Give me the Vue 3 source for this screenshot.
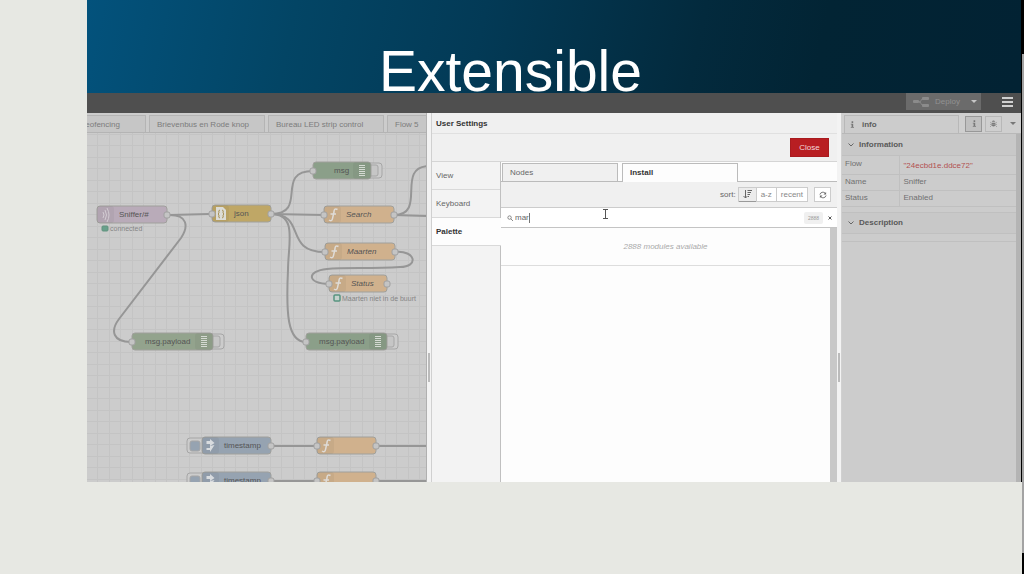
<script setup>
import { ref } from 'vue'

const query = ref('mar')

const flowTabs = [
  { name: 'Geofencing', cls: 'cut' },
  { name: 'Brievenbus en Rode knop', cls: 'wide' },
  { name: 'Bureau LED strip control', cls: 'wide' },
  { name: 'Flow 5', cls: 'open' },
]

const sections = ['View', 'Keyboard', 'Palette']

const wires = [
  'M170 215 L209 214',
  'M170 215 C187 215 189 226 181 238 L119 319 C110 331 113 342 131 342',
  'M271 214 C309 214 274 171 313 171',
  'M271 214 L324 215',
  'M271 214 C307 214 283 252 325 252',
  'M271 214 C298 214 288 244 288 270 C286 312 287 342 306 342',
  'M394 215 C428 215 394 166 430 166',
  'M394 215 L430 216',
  'M395 252 C416 250 419 267 400 267 C370 269 345 267 327 269 C306 271 307 284 329 284',
  'M271 446 L317 446',
  'M376 446 L430 446',
  'M271 481 L317 481',
  'M376 481 L430 481',
]

const nodes = [
  { x: 97, y: 206, w: 70, fill: '#b9abb9', label: 'Sniffer/#', tx: 119, icon: 'wave', out: true },
  { x: 212, y: 205, w: 59, fill: '#bfa766', label: 'json', tx: 234, icon: 'json', in: true, out: true },
  { x: 313, y: 162, w: 58, fill: '#8b9f89', label: 'msg', tx: 334, icon: 'debug', in: true },
  { x: 324, y: 206, w: 70, fill: '#d0b18d', label: 'Search', tx: 346, icon: 'fn', in: true, out: true, italic: true },
  { x: 325, y: 243, w: 70, fill: '#d0b18d', label: 'Maarten', tx: 347, icon: 'fn', in: true, out: true, italic: true },
  { x: 329, y: 275, w: 58, fill: '#d0b18d', label: 'Status', tx: 351, icon: 'fn', in: true, out: true, italic: true },
  { x: 132, y: 333, w: 81, fill: '#93a38d', label: 'msg.payload', tx: 145, icon: 'debug', in: true },
  { x: 306, y: 333, w: 81, fill: '#8b9f89', label: 'msg.payload', tx: 319, icon: 'debug', in: true },
  { x: 202, y: 437, w: 69, fill: '#96a3b1', label: 'timestamp', tx: 224, icon: 'inject', out: true },
  { x: 317, y: 437, w: 59, fill: '#d0b18d', label: '', tx: 0, icon: 'fn', in: true, out: true },
  { x: 202, y: 472, w: 69, fill: '#96a3b1', label: 'timestamp', tx: 224, icon: 'inject', out: true },
  { x: 317, y: 472, w: 59, fill: '#d0b18d', label: '', tx: 0, icon: 'fn', in: true, out: true },
]
</script>

<template>
  <div class="slide">
    <div class="stage">
      <header class="hero"><h1>Extensible</h1></header>

      <div class="navbar">
        <div class="deploy">
          <button class="deploy-main">
            <svg width="16" height="12" viewBox="0 0 16 12" aria-hidden="true">
              <rect x="0" y="4" width="6" height="3" rx="1" />
              <rect x="9" y="1" width="7" height="3" rx="1" />
              <rect x="9" y="8" width="7" height="3" rx="1" />
              <path d="M6 6 C9 6 7 3 10 3 M6 6 C9 6 7 9 10 9" />
            </svg>
            <span>Deploy</span>
          </button>
          <button class="deploy-caret" aria-label="Deploy options"><i class="caret"></i></button>
        </div>
        <button class="burger" aria-label="Menu"><i></i><i></i><i></i></button>
      </div>

      <div class="editor">
        <section class="workspace">
          <div class="flow-tabs">
            <button v-for="t in flowTabs" :key="t.name" :class="t.cls">{{ t.name }}</button>
          </div>
          <svg class="canvas" width="100%" height="349">
            <defs>
              <pattern id="grid" x="10" y="12" width="23" height="23" patternUnits="userSpaceOnUse">
                <path d="M0 0.5 H23 M0.5 0 V23 M0 12.5 H23 M12.5 0 V23" stroke="#c4c4c4" fill="none" />
              </pattern>
            </defs>
            <rect width="100%" height="100%" fill="#cccccc" />
            <rect width="100%" height="100%" fill="url(#grid)" />
            <g transform="translate(-87 -133)">
              <path v-for="(d, i) in wires" :key="i" :d="d" class="wire" />
              <g v-for="(n, i) in nodes" :key="'n' + i" :transform="`translate(${n.x} ${n.y})`">
                <g v-if="n.icon === 'debug'" class="tap">
                  <rect :x="n.w - 6" y="1" width="17" height="15" rx="3" />
                  <rect :x="n.w - 4" y="3" width="11" height="11" rx="2" />
                </g>
                <g v-if="n.icon === 'inject'" class="tap">
                  <rect x="-15" y="1" width="20" height="15" rx="3" />
                  <rect x="-12" y="4" width="10" height="10" rx="2" :fill="n.fill" />
                </g>
                <rect x="0" y="0" :width="n.w" height="17" rx="3" :fill="n.fill" class="body" />
                <rect v-if="n.icon === 'debug'" :x="n.w - 18" y="0" width="18" height="17" rx="3" class="shade" />
                <rect v-else x="0" y="0" width="17" height="17" rx="3" class="shade" />

                <path v-if="n.icon === 'fn'" class="glyph" d="M13.5 3.5 C11 2 10 3.5 10 6 L8.5 12.5 C8.3 15 6.5 15 5 14 M6.5 8 H12" />
                <g v-if="n.icon === 'wave'" class="glyph thin">
                  <path d="M6 6 Q8 9 6 12 M8 4 Q11 9 8 14 M10 2 Q14 9 10 16" />
                </g>
                <g v-if="n.icon === 'json'">
                  <path d="M4 2 H11 L14 5 V15 H4 Z" fill="#dcdcd6" />
                  <path d="M8 5 Q6 5 7 8 L6 9 L7 10 Q6 13 8 13 M10 5 Q12 5 11 8 L12 9 L11 10 Q12 13 10 13" fill="none" stroke="#a8935a" />
                </g>
                <path v-if="n.icon === 'inject'" d="M4.5 4 H8 V2 L12.5 6 L8 9 V7 H4.5 Z M4.5 11 H8 V9 L12.5 8 L8 15 V13 H4.5 Z" fill="#d9dcdf" />
                <path v-if="n.icon === 'debug'" :transform="`translate(${n.w - 12} 0)`" d="M0 3.5 H6 M0 5.5 H6 M0 7.5 H6 M0 9.5 H6 M0 11.5 H6 M0 13.5 H6" class="glyph thin bars" />

                <rect v-if="n.in" x="-3" y="6" width="6" height="6" rx="2" class="port" />
                <rect v-if="n.out" :x="n.w - 3" y="6" width="6" height="6" rx="2" class="port" />
                <text v-if="n.label" :x="n.tx - n.x" y="11" :class="{ italic: n.italic }">{{ n.label }}</text>
              </g>
              <rect x="102" y="226" width="6" height="5" rx="1" fill="#69a08c" stroke="#62937f" />
              <text x="110" y="231" class="status">connected</text>
              <rect x="334" y="295" width="6" height="6" rx="1" fill="#c5d2cc" stroke="#57947f" stroke-width="1.5" />
              <text x="342" y="301" class="status">Maarten niet in de buurt</text>
            </g>
          </svg>
        </section>

        <div class="separator"><i></i></div>

        <section class="settings">
          <h2>User Settings</h2>
          <div class="actions"><button class="close">Close</button></div>
          <div class="panel">
            <nav class="sections">
              <button v-for="s in sections" :key="s" :class="{ active: s === 'Palette' }">{{ s }}</button>
            </nav>
            <div class="palette">
              <div class="palette-tabs">
                <button>Nodes</button>
                <button class="active">Install</button>
              </div>
              <div class="toolbar">
                <span>sort:</span>
                <div class="group">
                  <button class="on" aria-label="Sort by relevance">
                    <svg width="9" height="9" viewBox="0 0 9 9" aria-hidden="true">
                      <path d="M2.5 0 V8 M0.5 6 L2.5 8 L4.5 6 M4.5 0.5 H9 M4.5 2.5 H8 M4.5 4.5 H7 M5 6.5 H6" />
                    </svg>
                  </button>
                  <button>a-z</button>
                  <button>recent</button>
                </div>
                <button class="refresh" aria-label="Refresh">
                  <svg width="8" height="8" viewBox="0 0 9 9" aria-hidden="true">
                    <path d="M1 4 A3.5 3.5 0 0 1 7 2.5 M8 5 A3.5 3.5 0 0 1 2 6.5" />
                    <path d="M8 1 V4 H5 Z M1 8 V5 H4 Z" class="solid" />
                  </svg>
                </button>
              </div>
              <div class="search">
                <svg width="6" height="6" viewBox="0 0 7 7" aria-hidden="true">
                  <circle cx="3" cy="3" r="2" /><path d="M4.5 4.5 L7 7" />
                </svg>
                <div class="field">
                  <input v-model="query" type="text" aria-label="Search modules" />
                  <i class="text-caret"></i>
                </div>
                <span class="count">2888</span>
                <button class="clear" aria-label="Clear search">
                  <svg width="4" height="4" viewBox="0 0 4 4" aria-hidden="true"><path d="M0.5 0.5 L3.5 3.5 M3.5 0.5 L0.5 3.5" /></svg>
                </button>
                <svg class="pointer" width="7" height="12" viewBox="0 0 7 12" aria-hidden="true">
                  <path d="M1 1.5 H6 M3.5 1 V10 M1 10.5 H6" />
                </svg>
              </div>
              <div class="list">
                <div class="results"><p>2888 modules available</p></div>
                <div class="track"></div>
              </div>
            </div>
          </div>
        </section>

        <div class="separator"><i></i></div>

        <aside class="sidebar">
          <div class="side-tabs">
            <button class="tab">
              <svg width="4" height="7" viewBox="0 0 5 8" aria-hidden="true"><path d="M2 0 H4 V2 H2 Z M1 3 H4 V7 H5 V8 H1 V7 H2 V4 H1 Z" /></svg>
              info
            </button>
            <button class="tool on" aria-label="Info">
              <svg width="4" height="7" viewBox="0 0 5 8"><path d="M2 0 H4 V2 H2 Z M1 3 H4 V7 H5 V8 H1 V7 H2 V4 H1 Z" /></svg>
            </button>
            <button class="tool" aria-label="Debug">
              <svg width="7" height="7" viewBox="0 0 8 8">
                <path d="M2 2 Q4 -1 6 2 Z M2 3 H6 V6 Q4 9 2 6 Z" />
                <path d="M0 2 L2 4 M8 2 L6 4 M0 5 H8 M0 8 L2 6 M8 8 L6 6" stroke="#9a9a9a" />
              </svg>
            </button>
            <button class="more" aria-label="More tabs"><i class="caret"></i></button>
          </div>
          <div class="side-body">
            <div class="side-content">
              <h3><svg width="6" height="4" viewBox="0 0 6 4" aria-hidden="true"><path d="M0.5 0.5 L3 3 L5.5 0.5" /></svg>Information</h3>
              <table>
                <tbody>
                  <tr class="tall"><th scope="row">Flow</th><td class="id">"24ecbd1e.ddce72"</td></tr>
                  <tr><th scope="row">Name</th><td>Sniffer</td></tr>
                  <tr><th scope="row">Status</th><td>Enabled</td></tr>
                </tbody>
              </table>
              <h3 class="desc"><svg width="6" height="4" viewBox="0 0 6 4" aria-hidden="true"><path d="M0.5 0.5 L3 3 L5.5 0.5" /></svg>Description</h3>
              <div class="empty"></div>
            </div>
            <div class="side-track"></div>
          </div>
        </aside>
      </div>
    </div>
    <div class="edge"></div>
  </div>
</template>

<style>
body {
  background: #e7e8e3;
}
</style>

<style scoped>
.slide {
  min-height: 100vh;
  padding-left: 87px;
  display: grid;
  grid-template-columns: minmax(0, 1fr) 2px;
  align-items: start;
  box-sizing: border-box;
  font: 8px/12px "Liberation Sans", Arial, sans-serif;
  color: #666;
}
.slide * {
  box-sizing: border-box;
}
button,
input {
  font: inherit;
  color: inherit;
  margin: 0;
  padding: 0;
  border: 0;
  border-radius: 0;
  background: none;
}
h1, h2, h3, p {
  margin: 0;
}
svg {
  display: block;
  flex: none;
}
.stage {
  border-right: 1px solid #000;
}
.edge {
  align-self: stretch;
  background: linear-gradient(#000 0 54px, #a3a3a3 54px calc(100% - 21px), #000 calc(100% - 21px));
}
.hero {
  padding: 49px 87px 0 0;
  text-align: center;
  background: linear-gradient(102deg, #03527c 0%, #034565 22%, #033a56 42%, #032a3d 65%, #022434 78%, #022233 100%);
}
.hero h1 {
  font-size: 57px;
  line-height: 44px;
  font-weight: 400;
  color: #fff;
}
.navbar {
  height: 20px;
  display: flex;
  justify-content: flex-end;
  align-items: flex-start;
  background: #4f4f4f;
}
.deploy {
  display: flex;
  height: 17px;
  margin-right: 21px;
  background: #6b6b6b;
  color: #929292;
}
.deploy-main {
  display: flex;
  align-items: center;
  gap: 6px;
  padding: 0 7px;
}
.deploy-main svg {
  fill: #8b8b8b;
  stroke: none;
}
.deploy-main path {
  fill: none;
  stroke: #8b8b8b;
}
.deploy-caret {
  width: 14px;
  display: grid;
  place-items: center;
}
.caret {
  border: 3px solid transparent;
  border-top-color: #c6c6c6;
  border-bottom: 0;
}
.burger {
  height: 17px;
  margin-right: 8px;
  display: flex;
  flex-direction: column;
  justify-content: center;
  gap: 2px;
}
.burger i {
  width: 11px;
  height: 2px;
  background: #d0d0d0;
}
.editor {
  display: grid;
  grid-template-columns: minmax(0, 1fr) 5px 405px 5px 179px;
}
.workspace {
  border-right: 1px solid #b0b0b0;
  background: #cccccc;
}
.flow-tabs {
  display: flex;
  gap: 3px;
  height: 20px;
  padding-top: 2px;
  border-bottom: 1px solid #b4b4b4;
  overflow: hidden;
}
.flow-tabs button {
  flex: none;
  padding: 2px 7px 0;
  border: 1px solid #b4b4b4;
  border-bottom: 0;
  background: #c6c6c6;
  color: #7c7c7c;
  text-align: left;
  white-space: nowrap;
}
.flow-tabs .cut {
  width: 59px;
  padding: 2px 25px 0 0;
  border-left: 0;
  direction: rtl;
}
.flow-tabs .wide {
  width: 116px;
}
.flow-tabs .open {
  width: 116px;
}
.wire {
  fill: none;
  stroke: #969696;
  stroke-width: 2;
}
.body {
  stroke: #a0a09c;
}
.shade {
  fill: #000;
  fill-opacity: 0.04;
}
.glyph {
  fill: none;
  stroke: #dfdcd8;
  stroke-width: 1.5;
}
.thin {
  stroke: #d3ccd3;
  stroke-width: 1;
}
.bars {
  stroke: #d5dad3;
}
.port {
  fill: #c4c4c4;
  stroke: #a0a0a0;
}
.tap rect {
  stroke: #a6a6a6;
}
.tap rect:first-child {
  fill: #cccccc;
}
.tap rect:last-child:not([fill]) {
  fill: #c6c6c6;
}
.canvas text {
  fill: #555;
}
.canvas .italic {
  font-style: italic;
}
.canvas .status {
  font-size: 7px;
  fill: #858585;
}
.separator {
  display: grid;
  place-items: center start;
  padding: 140px 0 0 1px;
  background: #f3f3f3;
  border-right: 1px solid #d0d0d0;
}
.separator i {
  width: 2px;
  height: 29px;
  background: #bbb;
}
.settings {
  display: flex;
  flex-direction: column;
  background: #f0f0f0;
}
.settings h2 {
  padding: 5px 4px 3px;
  height: 21px;
  border-bottom: 1px solid #e0e0e0;
  font-size: 8px;
  line-height: 12px;
  color: #333;
}
.actions {
  height: 27px;
  padding: 4px 8px;
  display: flex;
  justify-content: flex-end;
}
.close {
  width: 39px;
  height: 19px;
  background: #b81e22;
  border: 1px solid #a91b1f;
  color: #f3dada;
}
.panel {
  flex: 1;
  display: grid;
  grid-template-columns: 69px minmax(0, 1fr);
  border-top: 1px solid #d5d5d5;
}
.sections {
  display: flex;
  flex-direction: column;
  border-right: 1px solid #c0c0c0;
  background: #f3f3f3;
}
.sections button {
  height: 28px;
  padding: 0 4px;
  text-align: left;
  border-bottom: 1px solid #d9d9d9;
}
.sections .active {
  background: #fdfdfd;
  margin-right: -1px;
  font-weight: 700;
  color: #333;
}
.palette {
  display: flex;
  flex-direction: column;
  background: #fdfdfd;
}
.palette-tabs {
  display: flex;
  gap: 4px;
  height: 20px;
  padding: 1px 0 0 1px;
  border-bottom: 1px solid #bbb;
}
.palette-tabs button {
  width: 116px;
  padding: 0 7px;
  border: 1px solid #bbb;
  border-bottom: 0;
  background: #f0f0f0;
  text-align: left;
}
.palette-tabs .active {
  background: #fdfdfd;
  margin-bottom: -1px;
  font-weight: 700;
  color: #333;
}
.toolbar {
  display: flex;
  align-items: center;
  justify-content: flex-end;
  height: 26px;
  padding-right: 6px;
  border-bottom: 1px solid #ccc;
  background: #f0f0f0;
}
.group {
  display: flex;
  margin: 0 6px 0 2px;
  border: 1px solid #ccc;
  background: #fff;
  color: #888;
}
.group button {
  height: 13px;
  padding: 0 4px;
}
.group button + button {
  border-left: 1px solid #ccc;
}
.group .on {
  background: #ececec;
  box-shadow: 0 1px 0 #999;
}
.toolbar svg {
  fill: none;
  stroke: #666;
}
.refresh {
  width: 17px;
  height: 15px;
  display: grid;
  place-items: center;
  border: 1px solid #ccc;
  background: #fff;
}
.refresh .solid {
  fill: #666;
  stroke: none;
}
.search {
  position: relative;
  display: flex;
  align-items: center;
  height: 20px;
  padding: 0 5px 0 6px;
  border-bottom: 1px solid #c4c4c4;
  background: #fff;
}
.search svg {
  fill: none;
  stroke: #777;
}
.field {
  position: relative;
  flex: 1;
  margin-left: 2px;
}
.field input {
  display: block;
  width: 100%;
  height: 14px;
  outline: 0;
}
.text-caret {
  position: absolute;
  left: 14px;
  top: 2px;
  width: 1px;
  height: 10px;
  background: #777;
}
.count {
  padding: 0 4px;
  border-radius: 2px;
  background: #f0f0f0;
  font-size: 5px;
  color: #999;
}
.clear {
  margin-left: 5px;
}
.search .clear svg {
  stroke: #555;
}
.search .pointer {
  position: absolute;
  left: 101px;
  top: 0;
  stroke: #555;
}
.list {
  flex: 1;
  display: grid;
  grid-template-columns: minmax(0, 1fr) 7px;
}
.results p {
  padding: 13px 0 12px;
  border-bottom: 1px solid #ddd;
  text-align: center;
  font-style: italic;
  color: #aaa;
}
.track {
  background: #c8c8c8;
}
.sidebar {
  display: flex;
  flex-direction: column;
  background: #cccccc;
  color: #707070;
}
.side-tabs {
  display: flex;
  align-items: center;
  height: 21px;
  padding: 1px 0 0 2px;
  background: #cfcfcf;
  border-bottom: 1px solid #b8b8b8;
}
.side-tabs svg {
  fill: #777;
}
.side-tabs .tab {
  flex: 1;
  align-self: flex-end;
  height: 18px;
  display: flex;
  align-items: center;
  gap: 8px;
  padding-left: 5px;
  margin-right: 6px;
  border: 1px solid #b8b8b8;
  border-bottom: 0;
  background: #cccccc;
  font-weight: 700;
  color: #5c5c5c;
}
.tool {
  width: 17px;
  height: 16px;
  margin-right: 3px;
  display: grid;
  place-items: center;
  border: 1px solid #b8b8b8;
}
.tool.on {
  background: #c0c0c0;
  border-color: #989898;
}
.more {
  width: 16px;
  display: grid;
  place-items: center end;
  padding-right: 5px;
}
.more .caret {
  border-top-color: #777;
}
.side-body {
  flex: 1;
  display: grid;
  grid-template-columns: minmax(0, 1fr) 5px;
}
.side-track {
  background: #b4b4b4;
}
h3 {
  display: flex;
  align-items: center;
  gap: 5px;
  height: 22px;
  padding-left: 6px;
  border-bottom: 1px solid #c0c0c0;
  background: #c8c8c8;
  font-size: 8px;
  line-height: 12px;
  color: #595959;
}
h3 svg {
  fill: none;
  stroke: #666;
}
table {
  width: 100%;
  border-collapse: collapse;
  table-layout: fixed;
}
th,
td {
  height: 16px;
  padding: 0 4px 1px;
  border-bottom: 1px solid #c0c0c0;
  text-align: left;
  font-weight: 400;
}
th {
  width: 57px;
  padding-left: 3px;
  border-right: 1px solid #c0c0c0;
}
.tall th {
  height: 18px;
  padding-bottom: 2px;
}
.tall .id {
  padding-top: 3px;
  color: #b25050;
}
.desc {
  margin-top: 5px;
  border-top: 1px solid #c0c0c0;
}
.empty {
  height: 8px;
  border-bottom: 1px solid #c0c0c0;
}
</style>
